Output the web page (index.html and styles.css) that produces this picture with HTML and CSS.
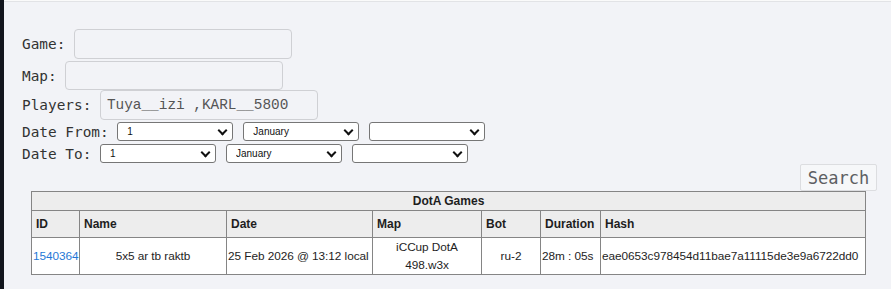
FILE: index.html
```html
<!DOCTYPE html>
<html lang="en">
<head>
    <meta charset="UTF-8">
    <title>DotA Games</title>
    <link rel="stylesheet" href="styles.css">
</head>
<body>
    <div class="topbar"></div>

    <form class="search-form">
        <div class="row row-game">
            <label for="game">Game:</label>
            <input type="text" id="game" class="field">
        </div>
        <div class="row row-map">
            <label for="map">Map:</label>
            <input type="text" id="map" class="field field-short">
        </div>
        <div class="row row-players">
            <label for="players">Players:</label>
            <input type="text" id="players" class="field" value="Tuya__izi ,KARL__5800">
        </div>
        <div class="row row-date">
            <label>Date From:</label>
            <span class="sel"><select><option>1</option></select></span>
            <span class="sel"><select><option>January</option></select></span>
            <span class="sel"><select><option></option></select></span>
        </div>
        <div class="row row-date row-date-to">
            <label>Date To:</label>
            <span class="sel"><select><option>1</option></select></span>
            <span class="sel"><select><option>January</option></select></span>
            <span class="sel"><select><option></option></select></span>
        </div>
        <div class="actions">
            <button type="button" class="btn-search">Search</button>
        </div>
    </form>

    <table class="games">
        <colgroup>
            <col style="width: 48px">
            <col style="width: 147px">
            <col style="width: 146px">
            <col style="width: 109px">
            <col style="width: 59px">
            <col style="width: 60px">
            <col style="width: 265px">
        </colgroup>
        <tr>
            <th colspan="7" class="title">DotA Games</th>
        </tr>
        <tr class="head">
            <th>ID</th>
            <th>Name</th>
            <th>Date</th>
            <th>Map</th>
            <th>Bot</th>
            <th>Duration</th>
            <th>Hash</th>
        </tr>
        <tr>
            <td><a href="#">1540364</a></td>
            <td class="center">5x5 ar tb raktb</td>
            <td>25 Feb 2026 @ 13:12 local</td>
            <td class="center">iCCup DotA 498.w3x</td>
            <td class="center">ru-2</td>
            <td>28m : 05s</td>
            <td>eae0653c978454d11bae7a11115de3e9a6722dd0</td>
        </tr>
    </table>
</body>
</html>
```

FILE: styles.css
```css
/* Базовые стили */
* {
    box-sizing: border-box;
}

body {
    margin: 0;
    min-height: 100vh;
    background: #f2f3f7;
    border-left: 4px solid #12151d;
    color: #333;
}

.topbar {
    height: 2px;
    background: #fafafa;
    border-bottom: 1px solid #e2e3e6;
}

/* Форма поиска */
.search-form {
    padding: 27px 14px 0 18px;
    font-family: "DejaVu Sans Mono", monospace;
    font-size: 14.4px;
}

.row {
    display: flex;
    align-items: center;
    gap: 0.6em;
}

.row label {
    color: #333;
    white-space: pre;
}

.field {
    width: 218px;
    height: 30px;
    padding: 2px 6px 3px;
    border: 1px solid #cfd0d4;
    border-radius: 4px;
    background: transparent;
    font-family: "Liberation Mono", "DejaVu Sans Mono", monospace;
    font-size: 14.4px;
    line-height: 23px;
    color: #555;
}

.row-game { margin-bottom: 2px; }
.row-map .field { height: 29px; }
.row-players { margin-bottom: 2px; }

.row-date {
    height: 19px;
    gap: 0;
}

.row-date label {
    margin-right: 8.7px;
}

.row-date-to {
    margin-top: 3px;
}

.sel {
    position: relative;
    display: inline-block;
    margin-right: 10px;
}

.sel select {
    appearance: none;
    -webkit-appearance: none;
    width: 116px;
    height: 19px;
    padding: 0 20px 0 9px;
    border: 1px solid #767676;
    border-radius: 3px;
    background: #fff;
    font-family: "Liberation Sans", Arial, sans-serif;
    font-size: 10px;
    color: #111;
}

.sel::after {
    content: '';
    position: absolute;
    right: 7px;
    top: 5px;
    width: 5px;
    height: 5px;
    border-right: 2px solid #111;
    border-bottom: 2px solid #111;
    transform: rotate(45deg);
    pointer-events: none;
}

.actions {
    display: flex;
    justify-content: flex-end;
    margin-top: 1px;
}

.btn-search {
    width: 77px;
    height: 27px;
    padding: 0;
    border: 1px solid #dcdde0;
    border-radius: 2px;
    background: #f6f7f9;
    font-family: "DejaVu Sans Mono", monospace;
    font-size: 17px;
    color: #5d5f63;
}

/* Таблица игр */
.games {
    margin-left: 27px;
    width: 834px;
    table-layout: fixed;
    border-collapse: collapse;
    font-family: "Liberation Sans", Arial, sans-serif;
    font-size: 12px;
    line-height: 18px;
    color: #1e1e1e;
}

.games th,
.games td {
    border: 1px solid #858585;
}

.games th {
    background: #ededed;
    text-align: left;
    font-weight: bold;
    padding: 4px 4px;
}

.games th.title {
    text-align: center;
    padding: 0;
}

.games td {
    background: #fff;
    padding: 0 1px;
    vertical-align: middle;
    white-space: nowrap;
    overflow: hidden;
    font-size: 11.8px;
    letter-spacing: -0.05px;
}

.games td.center {
    text-align: center;
    white-space: normal;
}

.games a {
    color: #1f78d6;
    text-decoration: none;
}
```
